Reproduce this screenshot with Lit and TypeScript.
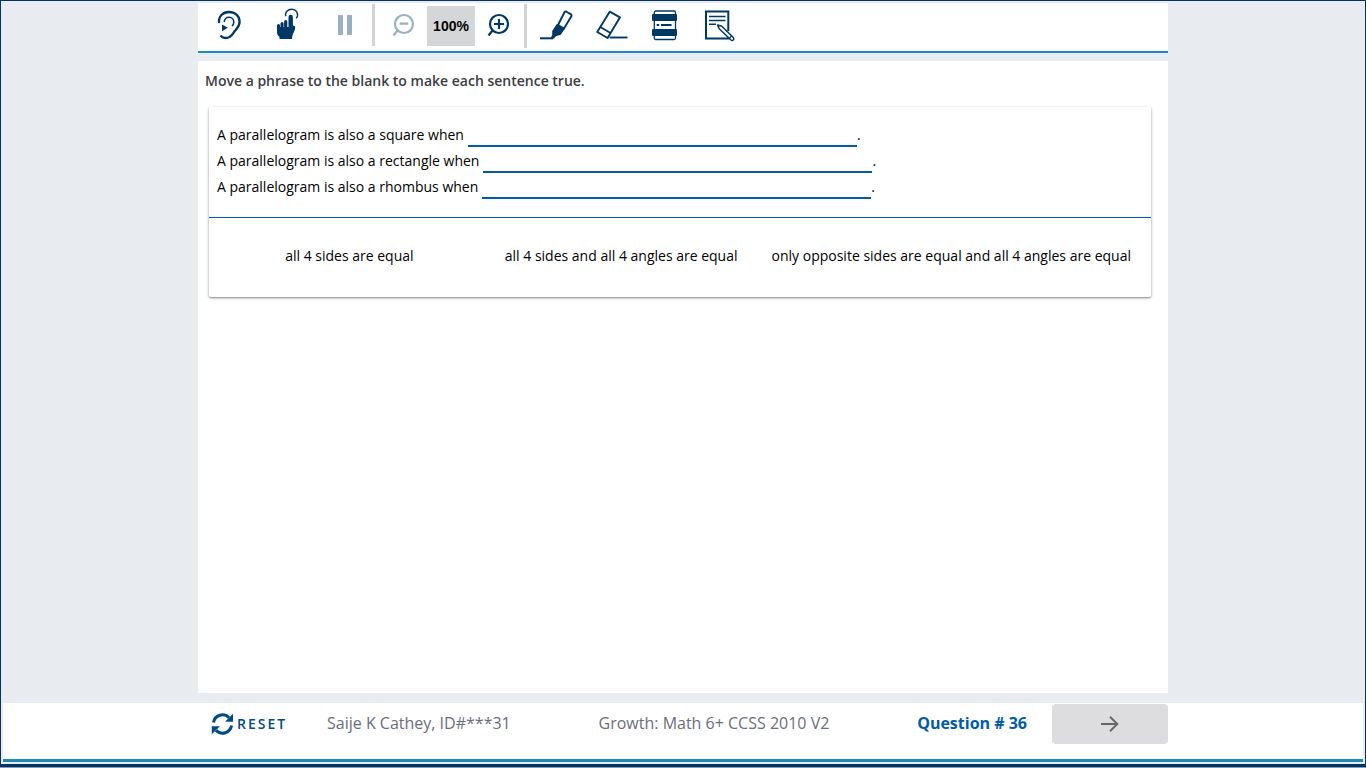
import { LitElement, html, css, svg } from "lit";
import { customElement, state } from "lit/decorators.js";

const icon = (body: unknown) => html`<svg class="icon" viewBox="0 0 36 36" width="36" height="36" aria-hidden="true">${body}</svg>`;

const icons = {
  ear: icon(svg`
    <path d="M8.200 16C7 9.500 12 5 18 5C24 5 28.600 9 28.600 14.800C28.600 19.500 26 21.500 23.800 24C21.500 27 20 31 15 31C12.500 31 10.800 30 9.500 28.400" fill="none" stroke="currentColor" stroke-width="2.300"/>
    <path d="M13.300 15C13.300 12 15.500 10.300 18 10.300C21 10.300 22.800 12.500 22.800 15C22.800 16.700 22.200 18 21 19" fill="none" stroke="currentColor" stroke-width="1.600"/>
    <path d="M11 17.500L16.800 20.800L11 24.200Z" fill="currentColor"/>`),
  hand: icon(svg`
    <path d="M16.800 9.200A6 5.500 0 1 1 27.200 11.200" fill="none" stroke="currentColor" stroke-width="1.400"/>
    <path d="M8 18.500a1.500 1.500 0 0 1 3 0V20h.5v-3.500a1.550 1.550 0 0 1 3.100 0V20h.5v-5.500a1.600 1.600 0 0 1 3.200 0V20h1.200V10a2.200 2.200 0 0 1 4.400 0v8.500C25.500 18.500 26.300 19.200 26.200 21C26 23.500 23.800 26 23.300 29.500L23 32H10.700L10.200 29.500C8.700 28.500 8 27 8 25Z" fill="currentColor"/>`),
  pause: icon(svg`<path d="M12 8H17V28H12ZM21 8H26V28H21Z" fill="currentColor"/>`),
  minus: icon(svg`
    <circle cx="20" cy="17" r="9" fill="none" stroke="currentColor" stroke-width="2.200"/>
    <path d="M13.500 23.500L9.500 28.500M15.700 16.700H24.300" fill="none" stroke="currentColor" stroke-width="2.200"/>`),
  plus: icon(svg`
    <circle cx="18" cy="17" r="9" fill="none" stroke="currentColor" stroke-width="2.200"/>
    <path d="M11.500 23.500L7.500 28.500M13 17H23M18 12V22" fill="none" stroke="currentColor" stroke-width="2.200"/>`),
  highlighter: icon(svg`
    <path d="M28 4.500L33 7.300Q34 8 33.500 9L26 21.500L20 18L26.500 5.200Q27 4.200 28 4.500Z" fill="none" stroke="currentColor" stroke-width="1.900"/>
    <path d="M18.800 17L26.800 21.800L22.800 27.800L17.800 29.200L15.800 31.800L12.800 30.500L14.200 28L14.200 24Z" fill="currentColor"/>
    <path d="M2 31.300H15" fill="none" stroke="currentColor" stroke-width="2"/>`),
  eraser: icon(svg`
    <path d="M17.700 4.700L28 10.300L15.600 31L5.200 25Z M8.300 20L18.500 26" fill="none" stroke="currentColor" stroke-width="1.900" stroke-linejoin="round"/>
    <path d="M17.500 30.500H35.500" fill="none" stroke="currentColor" stroke-width="1.900"/>`),
  reader: icon(svg`
    <rect x="8.300" y="4" width="21.200" height="28.500" rx="1.500" fill="none" stroke="currentColor" stroke-width="1.300"/>
    <rect x="6" y="7" width="25" height="7" rx="1" fill="currentColor"/>
    <rect x="6" y="22" width="25" height="7" rx="1" fill="currentColor"/>
    <path d="M10.700 18H13.200M15 18H25.500" fill="none" stroke="currentColor" stroke-width="1.900"/>`),
  notepad: icon(svg`
    <path d="M28.300 24V4.500H6V31.500H28.300V30" fill="none" stroke="currentColor" stroke-width="2"/>
    <path d="M9 9.500H25.500M9 13.500H25.500M9 17.300H16" fill="none" stroke="currentColor" stroke-width="1.600"/>
    <path d="M17.500 18L21.500 19L33.300 30.500Q34.500 32 33.300 33Q32.200 34 31 33L19.200 21.800Z" fill="#fff" stroke="currentColor" stroke-width="1.500" stroke-linejoin="round"/>
    <path d="M29.500 31L31.500 29" stroke="currentColor" stroke-width="1.200"/>`),
};

@customElement("app-root")
export class AppRoot extends LitElement {
  static styles = css`
    :host {
      display: block;
      font-family: "Open Sans", "Noto Sans", sans-serif;
      color: #000;
    }
    * { box-sizing: border-box; }
    button { font: inherit; color: inherit; background: none; border: 0; padding: 0; margin: 0; cursor: pointer; }
    .page { display: flex; flex-direction: column; min-height: 100vh; border-bottom: 1px solid #8e9aa8; }
    .frame {
      display: flex;
      flex: 1;
      flex-direction: column;
      background: #e8ebf0;
      border: 1px solid #003366;
      border-bottom-width: 3px;
    }
    .column { width: 100%; max-width: 970px; margin: 0 auto; }
    .toolbar {
      display: flex;
      align-items: flex-start;
      margin-top: 2px;
      height: 50px;
      padding-left: 2px;
      background: #fff;
      border-bottom: 2px solid #1f8bb8;
      color: #003865;
    }
    .tools { display: flex; padding-left: 1px; }
    .tool { display: flex; align-items: center; justify-content: center; height: 44px; width: 54px; }
    .tool.wide { width: 58px; }
    .tool.pause { width: 55px; }
    .tool.out { width: 51px; }
    .tool.in { width: 48px; }
    .tool:disabled { color: #9bb0c5; cursor: default; }
    .icon { display: block; }
    .divider { width: 3px; height: 42px; margin: 1px 1px 0; background: #d3d4d6; }
    .divider.tall { height: 44px; }
    .level {
      width: 48px;
      height: 40px;
      margin-top: 3px;
      background: #d5d6d8;
      color: #000;
      font: bold 14px/40px "Liberation Sans", Arial, sans-serif;
      text-align: center;
    }
    .question { flex: 1; margin-top: 8px; margin-bottom: 10px; background: #fff; padding: 8px 17px 8px 7px; }
    .prompt { margin: 0; font-size: 14px; line-height: 24px; font-weight: 600; color: #3c3d42; }
    .card {
      margin: 14px 0 0 4px;
      background: #fff;
      border-radius: 2px;
      box-shadow: 0 1px 3px rgba(0, 0, 0, 0.4), 0 1px 1px rgba(0, 0, 0, 0.15);
      font-size: 14px;
    }
    .sentences { margin: 0; padding: 15px 8px 17px; list-style: none; border-bottom: 1px solid #005ba8; }
    .sentence { display: flex; height: 26px; line-height: 26px; }
    .blank { width: 389px; height: 25px; margin-left: 4px; border-bottom: 2px solid #005ba8; }
    .choices { display: flex; padding: 22px 3px 25px 2px; }
    .choice { line-height: 32px; padding: 0 17px; white-space: nowrap; cursor: grab; }
    .choice:first-child { flex: 1; }
    .footer { margin: 0 2px; background: #fff; border-bottom: 3px solid #1f8bb8; height: 59px; }
    .bar { display: flex; padding-top: 1px; font-size: 16px; line-height: 40px; color: #6b6e78; }
    .reset {
      display: flex;
      align-items: center;
      width: 129px;
      padding-left: 13px;
      gap: 4px;
      color: #004b87;
      font-size: 14px;
      font-weight: 600;
      letter-spacing: 2px;
    }
    .info { display: flex; flex: 1; justify-content: space-between; line-height: 38px; white-space: nowrap; }
    .number { color: #005ba8; font-weight: 700; }
    .next {
      display: flex;
      align-items: center;
      justify-content: center;
      width: 116px;
      height: 40px;
      margin-left: 25px;
      background: #dddddf;
      border-radius: 4px;
      color: #666;
    }
    .gap { height: 2px; flex: none; }
  `;

  @state() private zoom = 100;

  private sentences = ["square", "rectangle", "rhombus"];
  private choices = [
    "all 4 sides are equal",
    "all 4 sides and all 4 angles are equal",
    "only opposite sides are equal and all 4 angles are equal",
  ];

  private changeZoom(step: number) {
    this.zoom = Math.min(200, Math.max(100, this.zoom + step));
  }

  render() {
    return html`
      <div class="page"><div class="frame">
        <header class="column toolbar" role="toolbar" aria-label="Test tools">
          <button class="tool wide" aria-label="Listen">${icons.ear}</button>
          <button class="tool wide" aria-label="Touch to hear">${icons.hand}</button>
          <button class="tool pause" aria-label="Pause" disabled>${icons.pause}</button>
          <span class="divider"></span>
          <button class="tool out" aria-label="Zoom out" ?disabled=${this.zoom <= 100} @click=${() => this.changeZoom(-25)}>${icons.minus}</button>
          <output class="level">${this.zoom}%</output>
          <button class="tool in" aria-label="Zoom in" @click=${() => this.changeZoom(25)}>${icons.plus}</button>
          <span class="divider tall"></span>
          <div class="tools">
            <button class="tool" aria-label="Highlighter">${icons.highlighter}</button>
            <button class="tool" aria-label="Eraser">${icons.eraser}</button>
            <button class="tool" aria-label="Line reader">${icons.reader}</button>
            <button class="tool" aria-label="Notepad">${icons.notepad}</button>
          </div>
        </header>
        <main class="column question">
          <h1 class="prompt">Move a phrase to the blank to make each sentence true.</h1>
          <section class="card">
            <ul class="sentences">
              ${this.sentences.map((shape) => html`
                <li class="sentence">
                  <span>A parallelogram is also a ${shape} when</span>
                  <span class="blank" role="img" aria-label="blank"></span><span>.</span>
                </li>`)}
            </ul>
            <div class="choices">
              ${this.choices.map((text) => html`<button class="choice" draggable="true">${text}</button>`)}
            </div>
          </section>
        </main>
        <footer class="footer">
          <div class="column bar">
            <button class="reset">
              <svg class="icon" viewBox="0 0 22 22" width="22" height="22" aria-hidden="true">
                <path d="M2.500 9.500A9 9 0 0 1 18 4.800M20.500 12.500A9 9 0 0 1 5 17.200" fill="none" stroke="currentColor" stroke-width="3"/>
                <path d="M22 .8V8.800H14ZM.8 21.200V13.200H9Z" fill="currentColor"/>
              </svg>
              <span>RESET</span>
            </button>
            <div class="info">
              <span>Saije K Cathey, ID#***31</span>
              <span>Growth: Math 6+ CCSS 2010 V2</span>
              <span class="number">Question # 36</span>
            </div>
            <button class="next" aria-label="Next question">
              <svg class="icon" viewBox="0 0 18 16" width="18" height="16" aria-hidden="true">
                <path d="M0 8H16.500M9 .8L16.300 8L9 15.200" fill="none" stroke="currentColor" stroke-width="1.900"/>
              </svg>
            </button>
          </div>
        </footer>
        <div class="gap"></div>
      </div></div>
    `;
  }
}
